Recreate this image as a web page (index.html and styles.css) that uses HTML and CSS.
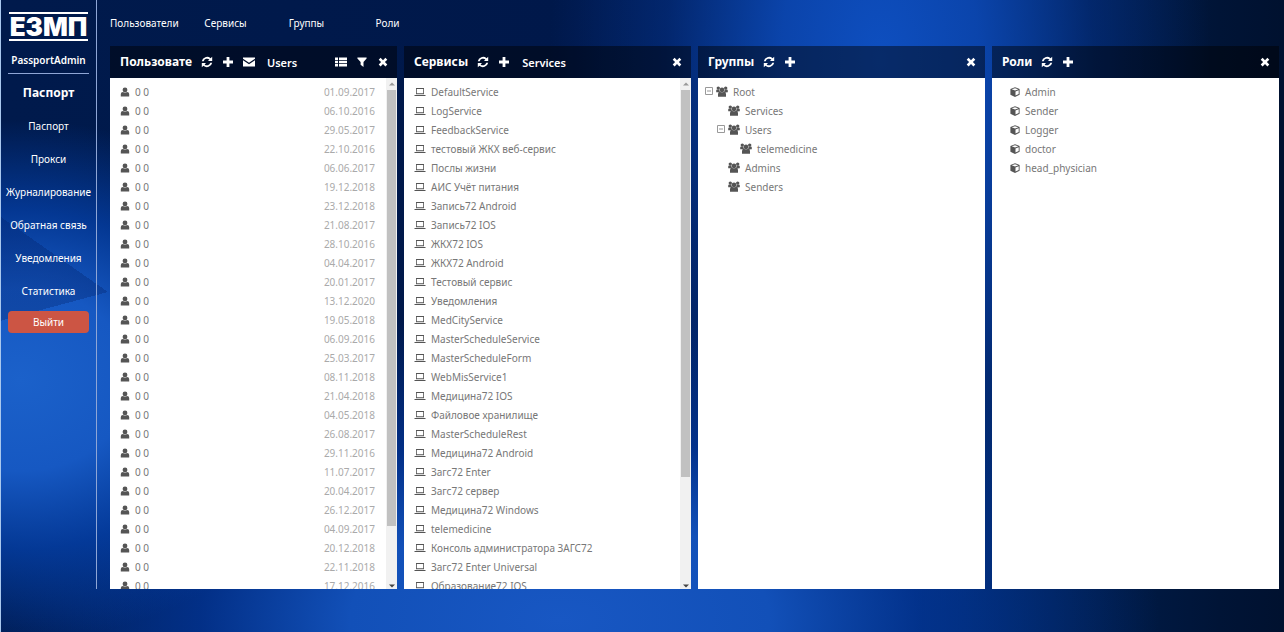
FILE: index.html
```html
<!DOCTYPE html>
<html lang="ru">

<head>
    <meta charset="UTF-8">
    <meta name="viewport" content="width=device-width, initial-scale=1.0">
    <title>ЕЗМП - PassportAdmin</title>
    <link rel="stylesheet" href="styles.css">
</head>

<body>

    <!-- Icons -->
    <svg class="sprite" aria-hidden="true">
        <symbol id="i-refresh" viewBox="0 0 12 12">
            <path d="M.8 5.200A5.300 5.300 0 0 1 9.600 2.300L11.200.8V5H7L8.400 3.600A3.500 3.500 0 0 0 2.700 5.200ZM11.200 6.800A5.300 5.300 0 0 1 2.400 9.700L.8 11.200V7H5L3.600 8.400A3.500 3.500 0 0 0 9.300 6.800Z" />
        </symbol>
        <symbol id="i-plus" viewBox="0 0 12 12">
            <path d="M4.600 1h2.800v3.600H11v2.800H7.400V11H4.600V7.400H1V4.600h3.600z" />
        </symbol>
        <symbol id="i-mail" viewBox="0 0 12 12">
            <path d="M0 1.500h12v1.300L6 6.700 0 2.800zM0 4.200l6 4 6-4v6.300H0z" />
        </symbol>
        <symbol id="i-list" viewBox="0 0 12 12">
            <path d="M0 1.500h3v2.400H0zM4 1.500h8v2.400H4zM0 4.800h3v2.400H0zM4 4.800h8v2.400H4zM0 8.100h3v2.400H0zM4 8.100h8v2.400H4z" />
        </symbol>
        <symbol id="i-filter" viewBox="0 0 12 12">
            <path d="M1.400 1.500h9.200v1L7.500 6v5L4.600 8.800V6L1.400 2.500z" />
        </symbol>
        <symbol id="i-close" viewBox="0 0 12 12">
            <path d="M3.600 1.800 6 4.200l2.400-2.400 1.900 1.900L7.900 6.100l2.400 2.400-1.900 1.900L6 8l-2.400 2.400-1.900-1.900 2.400-2.400-2.400-2.400z" />
        </symbol>
        <symbol id="i-user" viewBox="0 0 10 10">
            <circle cx="5" cy="2.900" r="2.400" />
            <path d="M.8 9.500V7Q.8 5 3 4.900q2 1.400 4 0 2.200.1 2.200 2.100v2.500z" />
        </symbol>
        <symbol id="i-laptop" viewBox="0 0 12 10">
            <path d="M2 1h8v6.200H2zM2.800 1.900v4.400h6.400V1.900zM.5 7.900h11v1.200H.5z" fill-rule="evenodd" />
        </symbol>
        <symbol id="i-group" viewBox="0 0 12 11">
            <circle cx="2.300" cy="2.100" r="1.700" />
            <circle cx="9.700" cy="2.100" r="1.700" />
            <circle cx="6" cy="3.900" r="2.300" />
            <path d="M.2 6.300V4.500q0-1 1-1h2.300Q3.200 5.200 4.200 6zM11.800 6.300V4.500q0-1-1-1H8.500Q8.800 5.200 7.800 6zM2 10.700V8Q2 6 4 5.700q2 1.300 4 0Q10 6 10 8v2.700z" />
        </symbol>
        <symbol id="i-cube" viewBox="0 0 10 10">
            <path d="M5 .2 9.600 1.900v5.900L5 9.900.4 7.800V1.900zM5 1.200 1.800 2.300 5 3.500l3.200-1.200zM5.500 4.400v4.100L8.700 7V3.200z" fill-rule="evenodd" />
        </symbol>
        <symbol id="i-minus" viewBox="0 0 9 9">
            <path d="M.5.500h7v7h-7zM2 4h4" fill="none" stroke="currentColor" />
        </symbol>
        <symbol id="i-up" viewBox="0 0 6 4">
            <path d="M0 3.500 3 .5l3 3z" />
        </symbol>
        <symbol id="i-down" viewBox="0 0 6 4">
            <path d="M0 .5 3 3.500l3-3z" />
        </symbol>
    </svg>

    <aside class="sidebar">
        <div class="logo">ЕЗМП</div>
        <div class="app-name">PassportAdmin</div>
        <nav class="side-nav">
            <h1>Паспорт</h1>
            <a href="#passport">Паспорт</a>
            <a href="#proxy">Прокси</a>
            <a href="#logs">Журналирование</a>
            <a href="#feedback">Обратная связь</a>
            <a href="#notifications">Уведомления</a>
            <a href="#stats">Статистика</a>
        </nav>
        <button class="logout" type="button">Выйти</button>
    </aside>

    <main class="content">
        <nav class="tabs">
            <a href="#users">Пользователи</a>
            <a href="#services">Сервисы</a>
            <a href="#groups">Группы</a>
            <a href="#roles">Роли</a>
        </nav>

        <div class="panels">
            <section class="panel" id="users">
                <header class="panel-head">
                    <h2>Пользовате</h2>
                    <button type="button" aria-label="Обновить"><svg><use href="#i-refresh" /></svg></button>
                    <button type="button" aria-label="Добавить"><svg><use href="#i-plus" /></svg></button>
                    <button type="button" aria-label="Написать"><svg><use href="#i-mail" /></svg></button>
                    <span class="filter-name">Users</span>
                    <button class="push" type="button" aria-label="Список"><svg><use href="#i-list" /></svg></button>
                    <button type="button" aria-label="Фильтр"><svg><use href="#i-filter" /></svg></button>
                    <button type="button" aria-label="Закрыть"><svg><use href="#i-close" /></svg></button>
                </header>
                <div class="panel-body">
                    <ul class="list" id="user-list"></ul>
                    <div class="scrollbar">
                        <svg><use href="#i-up" /></svg>
                        <div class="track"><div class="thumb"></div></div>
                        <svg class="down"><use href="#i-down" /></svg>
                    </div>
                </div>
            </section>

            <section class="panel" id="services">
                <header class="panel-head">
                    <h2>Сервисы</h2>
                    <button type="button" aria-label="Обновить"><svg><use href="#i-refresh" /></svg></button>
                    <button type="button" aria-label="Добавить"><svg><use href="#i-plus" /></svg></button>
                    <span class="filter-name">Services</span>
                    <button class="push" type="button" aria-label="Закрыть"><svg><use href="#i-close" /></svg></button>
                </header>
                <div class="panel-body">
                    <ul class="list" id="service-list"></ul>
                    <div class="scrollbar">
                        <svg><use href="#i-up" /></svg>
                        <div class="track"><div class="thumb"></div></div>
                        <svg class="down"><use href="#i-down" /></svg>
                    </div>
                </div>
            </section>

            <section class="panel" id="groups">
                <header class="panel-head">
                    <h2>Группы</h2>
                    <button type="button" aria-label="Обновить"><svg><use href="#i-refresh" /></svg></button>
                    <button type="button" aria-label="Добавить"><svg><use href="#i-plus" /></svg></button>
                    <button class="push" type="button" aria-label="Закрыть"><svg><use href="#i-close" /></svg></button>
                </header>
                <div class="panel-body">
                    <ul class="list tree">
                        <li><svg class="toggle"><use href="#i-minus" /></svg><svg class="group"><use href="#i-group" /></svg>Root</li>
                        <li class="level-1"><svg class="group"><use href="#i-group" /></svg>Services</li>
                        <li class="level-1 open"><svg class="toggle"><use href="#i-minus" /></svg><svg class="group"><use href="#i-group" /></svg>Users</li>
                        <li class="level-2"><svg class="group"><use href="#i-group" /></svg>telemedicine</li>
                        <li class="level-1"><svg class="group"><use href="#i-group" /></svg>Admins</li>
                        <li class="level-1"><svg class="group"><use href="#i-group" /></svg>Senders</li>
                    </ul>
                </div>
            </section>

            <section class="panel" id="roles">
                <header class="panel-head">
                    <h2>Роли</h2>
                    <button type="button" aria-label="Обновить"><svg><use href="#i-refresh" /></svg></button>
                    <button type="button" aria-label="Добавить"><svg><use href="#i-plus" /></svg></button>
                    <button class="push" type="button" aria-label="Закрыть"><svg><use href="#i-close" /></svg></button>
                </header>
                <div class="panel-body">
                    <ul class="list roles">
                        <li><svg><use href="#i-cube" /></svg>Admin</li>
                        <li><svg><use href="#i-cube" /></svg>Sender</li>
                        <li><svg><use href="#i-cube" /></svg>Logger</li>
                        <li><svg><use href="#i-cube" /></svg>doctor</li>
                        <li><svg><use href="#i-cube" /></svg>head_physician</li>
                    </ul>
                </div>
            </section>
        </div>
    </main>

    <script src="script.js"></script>

</body>

</html>
```

FILE: styles.css
```css
* {
    box-sizing: border-box;
}

body {
    font-family: "Noto Sans", "Open Sans", sans-serif;
    font-size: 10px;
    margin: 0;
    height: 100vh;
    display: flex;
    padding-bottom: 43px;
    overflow: hidden;
    border-left: 1px solid #a9c8ee;
    color: white;
    background:
        conic-gradient(from 255deg at 108px 292px, rgba(0, 30, 100, 0.3) 50deg, transparent 0) 0 0 / 108px 340px no-repeat,
        radial-gradient(ellipse 320px 260px at 20px 380px, #1b61ca 0%, #1658c2 35%, rgba(5, 65, 170, 0.75) 65%, rgba(0, 30, 100, 0) 100%),
        radial-gradient(ellipse 600px 310px at 560px 620px, #1857c3 0%, #1250b8 35%, rgba(3, 55, 155, 0.75) 60%, rgba(0, 30, 90, 0) 100%),
        radial-gradient(ellipse 330px 560px at 880px 60px, #0e4fc0 0%, rgba(12, 72, 180, 0.9) 30%, rgba(5, 50, 140, 0.5) 65%, rgba(0, 30, 90, 0) 100%),
        linear-gradient(90deg, #001a4c 0%, #00184a 45%, #002560 75%, #001436 95%, #00112f 100%);
}

.sprite {
    display: none;
}

svg {
    fill: currentColor;
    flex-shrink: 0;
}

a {
    color: white;
    text-decoration: none;
}

/* Sidebar */
.sidebar {
    width: 96px;
    padding: 12px 7px 0;
    border-right: 1px solid #8fa6d6;
    text-align: center;
    flex-shrink: 0;
}

.logo {
    display: flex;
    align-items: center;
    justify-content: center;
    margin: 0 1px;
    height: 29px;
    border-top: 2px solid white;
    border-bottom: 2px solid white;
    font: 900 26px/24px Inter, "Liberation Sans", sans-serif;
}

.app-name {
    font-weight: 600;
    line-height: 14px;
    padding: 12px 0 6px;
    border-bottom: 1px solid #8fa6d6;
}

.side-nav {
    display: flex;
    flex-direction: column;
    align-items: center;
}

.side-nav h1 {
    margin: 10px 0 8px;
    font-size: 12px;
    line-height: 18px;
}

.side-nav a {
    line-height: 33px;
    white-space: nowrap;
}

.logout {
    width: 100%;
    height: 22px;
    margin-top: 3px;
    border: none;
    border-radius: 4px;
    background-color: #cc5544;
    color: white;
    font: inherit;
    cursor: pointer;
}

/* Main area */
.content {
    flex: 1;
    min-width: 0;
    display: flex;
    flex-direction: column;
    padding: 0 5px 0 13px;
}

.tabs {
    display: flex;
    height: 46px;
    align-items: center;
}

.tabs a {
    width: 81px;
    text-align: center;
}

.tabs a:first-child {
    width: 75px;
    text-align: left;
}

.panels {
    flex: 1;
    min-height: 0;
    display: grid;
    grid-template-columns: repeat(4, 1fr);
    gap: 7px;
}

.panel {
    display: flex;
    flex-direction: column;
    min-width: 0;
    min-height: 0;
}

.panel-head {
    display: flex;
    align-items: center;
    gap: 9px;
    height: 32px;
    padding: 0 8px 0 10px;
    background-color: rgba(0, 0, 0, 0.45);
    flex-shrink: 0;
}

.panel-head h2 {
    margin: 0;
    white-space: nowrap;
    font-size: 12px;
    line-height: 18px;
}

.panel-head button {
    display: flex;
    padding: 0;
    border: none;
    background: none;
    color: white;
    cursor: pointer;
}

.panel-head svg {
    width: 12px;
    height: 12px;
}

.filter-name {
    margin-left: 3px;
    font-size: 11px;
    font-weight: 600;
}

.panel-head .push {
    margin-left: auto;
}

.panel-body {
    flex: 1;
    min-height: 0;
    display: flex;
    overflow: hidden;
    background-color: white;
    color: #777;
}

/* Scrollbar */
.scrollbar {
    display: flex;
    flex-direction: column;
    align-items: center;
    width: 11px;
    padding: 4px 0 1px;
    background-color: #f1f1f1;
    color: #999;
}

.scrollbar svg {
    width: 6px;
    height: 4px;
}

.scrollbar .down {
    color: #444;
}

.track {
    flex: 1;
    width: 9px;
    padding: 4px 0;
}

.thumb {
    height: 79%;
    background-color: #c1c1c1;
}

#users .thumb {
    height: 89%;
}

/* Lists */
.list {
    flex: 1;
    min-height: 0;
    list-style: none;
    margin: 0;
    padding: 4px 11px 0 10px;
}

.list li {
    display: flex;
    align-items: center;
    gap: 5px;
    height: 19px;
    white-space: nowrap;
}

.list svg {
    width: 10px;
    height: 10px;
    color: #555;
}

.list .laptop {
    width: 12px;
}

.list .group {
    width: 12px;
    height: 11px;
}

.list time {
    margin-left: auto;
    color: #aaa;
}

.list .toggle {
    width: 9px;
    height: 9px;
    margin-right: -3px;
    color: #999;
}

.tree {
    padding-left: 7px;
}

.tree .level-1 {
    padding-left: 23px;
}

.tree .level-1.open {
    padding-left: 12px;
}

.tree .level-2 {
    padding-left: 35px;
}

.roles {
    padding-left: 18px;
}
```

FILE: script.js
```js
const dates = [
    '01.09.2017', '06.10.2016', '29.05.2017', '22.10.2016', '06.06.2017', '19.12.2018', '23.12.2018',
    '21.08.2017', '28.10.2016', '04.04.2017', '20.01.2017', '13.12.2020', '19.05.2018', '06.09.2016',
    '25.03.2017', '08.11.2018', '21.04.2018', '04.05.2018', '26.08.2017', '29.11.2016', '11.07.2017',
    '20.04.2017', '26.12.2017', '04.09.2017', '20.12.2018', '22.11.2018', '17.12.2016'
];

const services = [
    'DefaultService', 'LogService', 'FeedbackService', 'тестовый ЖКХ веб-сервис', 'Послы жизни',
    'АИС Учёт питания', 'Запись72 Android', 'Запись72 IOS', 'ЖКХ72 IOS', 'ЖКХ72 Android',
    'Тестовый сервис', 'Уведомления', 'MedCityService', 'MasterScheduleService', 'MasterScheduleForm',
    'WebMisService1', 'Медицина72 IOS', 'Файловое хранилище', 'MasterScheduleRest', 'Медицина72 Android',
    'Загс72 Enter', 'Загс72 сервер', 'Медицина72 Windows', 'telemedicine', 'Консоль администратора ЗАГС72',
    'Загс72 Enter Universal', 'Образование72 IOS'
];

document.getElementById('user-list').innerHTML = dates
    .map(date => `<li><svg><use href="#i-user" /></svg>0 0<time>${date}</time></li>`)
    .join('');

document.getElementById('service-list').innerHTML = services
    .map(name => `<li><svg class="laptop"><use href="#i-laptop" /></svg>${name}</li>`)
    .join('');
```
